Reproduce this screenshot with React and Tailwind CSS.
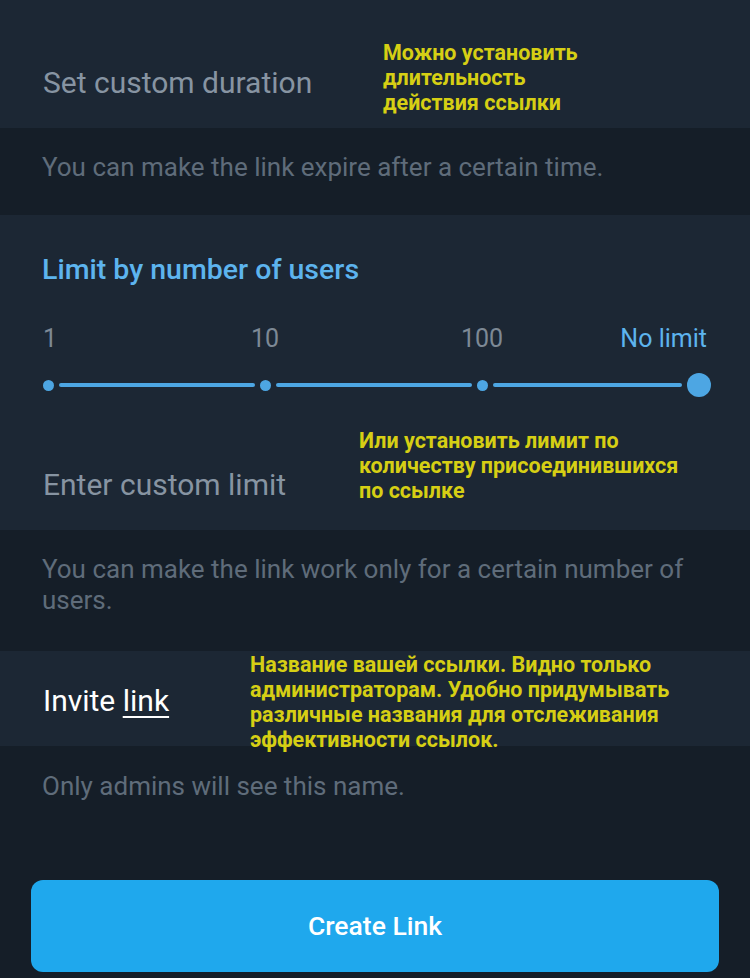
import React from 'react';

const Note = ({ className, children }) => (
  <div className={`absolute text-[#d6cf14] font-bold text-[21.5px] leading-[25px] whitespace-nowrap ${className}`}>{children}</div>
);

const Dot = ({ big }) => (
  <span className={big ? 'w-[24px] h-[24px] rounded-full bg-[#4da6e3] shrink-0' : 'w-[11px] h-[11px] rounded-full bg-[#4da6e3] shrink-0'} />
);

export default function App() {
  return (
    <div className="w-[750px] h-[978px] bg-[#151e28] flex flex-col overflow-hidden" style={{ fontFamily: 'Roboto, "Noto Sans", sans-serif' }}>
      {/* Срок действия */}
      <div className="relative h-[128px] bg-[#1c2734] flex items-center px-[43px] pt-[36px]">
        <span className="text-[30px] text-[#8794a2]">Set custom duration</span>
        <Note className="left-[383px] top-[40px]">Можно установить<br />длительность<br />действия ссылки</Note>
      </div>
      <div className="h-[87px] flex items-center px-[42px] pb-[8px]">
        <span className="text-[26px] text-[#5f6c7a]">You can make the link expire after a certain time.</span>
      </div>

      {/* Лимит пользователей */}
      <div className="relative h-[315px] bg-[#1c2734] flex flex-col">
        <div className="mt-[39px] px-[42px] text-[28.5px] font-medium text-[#5db4ee] leading-[32px]">Limit by number of users</div>
        <div className="mt-[38px] px-[43px] flex text-[25px] leading-[30px] text-[#7d8995]">
          <span className="w-[20px]">1</span>
          <span className="w-[80px] ml-[162px] text-center">10</span>
          <span className="w-[80px] ml-[137px] text-center">100</span>
          <span className="flex-1 text-right text-[#5db4ee]">No limit</span>
        </div>
        <div className="mt-[19px] ml-[42.5px] flex items-center">
          <Dot />
          <span className="w-[196px] h-[4px] rounded-full bg-[#4da6e3] mx-[5px]" />
          <Dot />
          <span className="w-[196px] h-[4px] rounded-full bg-[#4da6e3] mx-[5px]" />
          <Dot />
          <span className="w-[189.5px] h-[4px] rounded-full bg-[#4da6e3] mx-[5px]" />
          <Dot big />
        </div>
        <div className="mt-[70px] px-[43px] text-[30px] text-[#8794a2] leading-[36px]">Enter custom limit</div>
        <Note className="left-[359px] top-[213px]">Или установить лимит по<br />количеству присоединившихся<br />по ссылке</Note>
      </div>
      <div className="h-[121px] flex items-start pt-[24px] pl-[42px] pr-[40px]">
        <span className="text-[26px] leading-[31px] text-[#5f6c7a]">You can make the link work only for a certain number of users.</span>
      </div>

      {/* Название ссылки */}
      <div className="relative h-[95px] bg-[#1c2734] flex items-center px-[43px] pt-[4px]">
        <span className="text-[30px] text-white">Invite <span className="underline underline-offset-[5px] decoration-[2px]">link</span></span>
        <Note className="left-[250px] top-[1px]">Название вашей ссылки. Видно только<br />администраторам. Удобно придумывать<br />различные названия для отслеживания<br />эффективности ссылок.</Note>
      </div>
      <div className="h-[80px] flex items-center px-[42px]">
        <span className="text-[26px] text-[#5f6c7a]">Only admins will see this name.</span>
      </div>

      <div className="flex-1 flex flex-col justify-end px-[31px] pb-[6px]">
        <button className="h-[92px] w-full rounded-[12px] bg-[#1fa8ed] text-white text-[26.5px] font-medium">Create Link</button>
      </div>
    </div>
  );
}
